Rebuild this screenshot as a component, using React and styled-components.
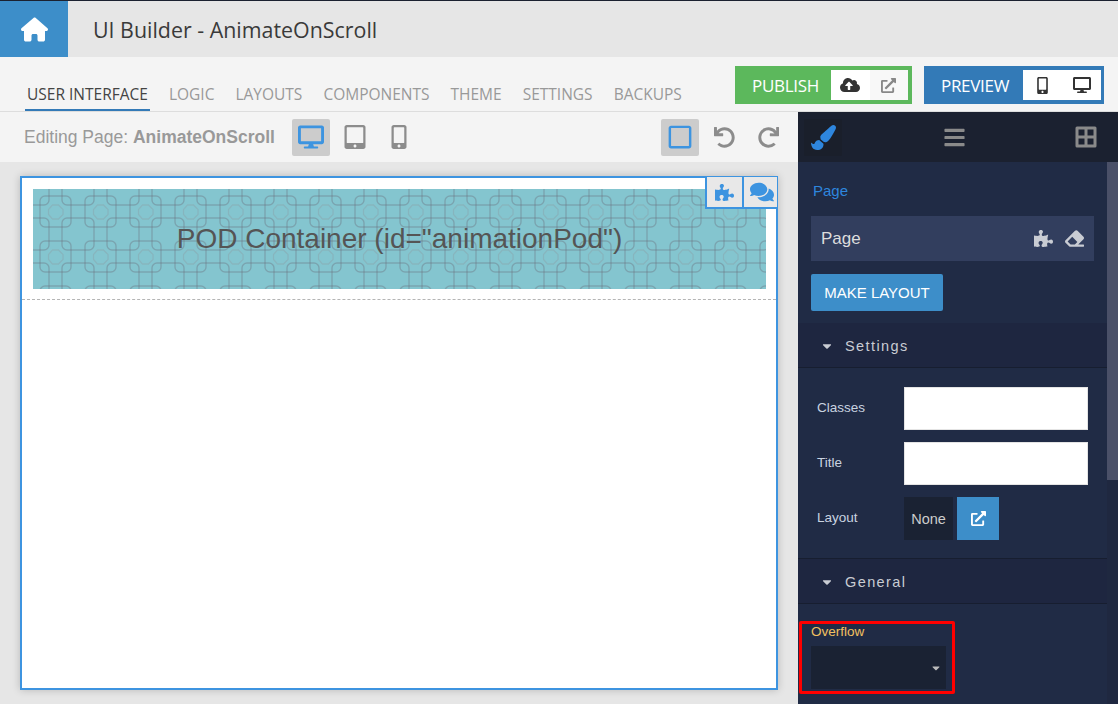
import React from 'react'
import styled, { createGlobalStyle } from 'styled-components'
import {
  FaCloudUploadAlt, FaExternalLinkAlt, FaMobileAlt, FaDesktop, FaTabletAlt,
  FaRegSquare, FaUndo, FaRedo, FaPaintBrush, FaBars, FaBorderAll, FaPuzzlePiece,
  FaComments, FaEraser, FaCaretDown,
} from 'react-icons/fa'
import { FaHouse } from 'react-icons/fa6'

const TabsData = ['USER INTERFACE', 'LOGIC', 'LAYOUTS', 'COMPONENTS', 'THEME', 'SETTINGS', 'BACKUPS']

const App = () => {
  return (
    <Page>
      <GlobalStyle />
      <Header>
        <HomeButton><FaHouse /></HomeButton>
        <AppTitle>UI Builder - AnimateOnScroll</AppTitle>
      </Header>
      <TabsBar>
        <Tabs>
          {TabsData.map((tab, index) => (
            <Tab key={tab} $active={index === 0}>{tab}</Tab>
          ))}
        </Tabs>
        <ActionGroup $color="#5cb85c" $width="177px">
          <ActionLabel>PUBLISH</ActionLabel>
          <ActionIcons $width="77px">
            <ActionIcon $color="#333"><FaCloudUploadAlt size={20} /></ActionIcon>
            <ActionIcon $color="#888" $muted><FaExternalLinkAlt size={15} /></ActionIcon>
          </ActionIcons>
        </ActionGroup>
        <ActionGroup $color="#337ab7" $width="180px" $preview>
          <ActionLabel>PREVIEW</ActionLabel>
          <ActionIcons $width="78px">
            <ActionIcon $color="#333"><FaMobileAlt size={17} /></ActionIcon>
            <ActionIcon $color="#333"><FaDesktop size={18} /></ActionIcon>
          </ActionIcons>
        </ActionGroup>
      </TabsBar>
      <Main>
        <Editor>
          <Toolbar>
            <EditingLabel>Editing Page: <b>AnimateOnScroll</b></EditingLabel>
            <ToolGroup>
              <ToolButton $active><FaDesktop size={26} /></ToolButton>
              <ToolButton><FaTabletAlt size={24} /></ToolButton>
              <ToolButton><FaMobileAlt size={24} /></ToolButton>
            </ToolGroup>
            <ToolGroup $end>
              <ToolButton $active><FaRegSquare size={26} /></ToolButton>
              <ToolButton><FaUndo size={21} /></ToolButton>
              <ToolButton><FaRedo size={21} /></ToolButton>
            </ToolGroup>
          </Toolbar>
          <CanvasArea>
            <Canvas>
              <CanvasTools>
                <CanvasTool><FaPuzzlePiece size={19} /></CanvasTool>
                <CanvasTool $wide><FaComments size={24} /></CanvasTool>
              </CanvasTools>
              <PodBlock>
                <PodPattern aria-hidden="true">
                  <defs>
                    <pattern id="podTile" width="45" height="45" patternUnits="userSpaceOnUse">
                      <g fill="none" stroke="#6a6f7c" strokeOpacity="0.38" strokeWidth="1.4">
                        <rect x="7" y="7" width="31" height="31" rx="5" />
                        <path d="M0 16H11a5 5 0 0 0 5-5V0M45 16H34a5 5 0 0 1-5-5V0M0 29H11a5 5 0 0 1 5 5V45M45 29H34a5 5 0 0 0-5 5V45" />
                      </g>
                      <path d="M19.5 16h6l4.500 4.500v5L25.500 30h-6L15.500 25.500v-5z" fill="none" stroke="#8a9ea6" strokeOpacity="0.4" strokeWidth="1.3" />
                    </pattern>
                  </defs>
                  <rect width="100%" height="100%" fill="url(#podTile)" />
                </PodPattern>
                <PodText>POD Container (id="animationPod")</PodText>
              </PodBlock>
              <DashedLine />
            </Canvas>
          </CanvasArea>
        </Editor>
        <Sidebar>
          <SideTabs>
            <SideTab $active><FaPaintBrush size={25} /></SideTab>
            <SideTab><FaBars size={23} /></SideTab>
            <SideTab><FaBorderAll size={24} /></SideTab>
          </SideTabs>
          <SideBody>
            <SideContent>
              <Crumb>Page</Crumb>
              <PageRow>
                <PageName>Page</PageName>
                <PageIcons>
                  <FaPuzzlePiece size={19} />
                  <FaEraser size={19} />
                </PageIcons>
              </PageRow>
              <MakeLayout>MAKE LAYOUT</MakeLayout>
              <SectionHead><FaCaretDown size={14} />Settings</SectionHead>
              <Fields>
                <FieldRow>
                  <FieldLabel>Classes</FieldLabel>
                  <TextBox />
                </FieldRow>
                <FieldRow>
                  <FieldLabel>Title</FieldLabel>
                  <TextBox />
                </FieldRow>
                <FieldRow>
                  <FieldLabel>Layout</FieldLabel>
                  <NoneBox>None</NoneBox>
                  <OpenButton><FaExternalLinkAlt size={15} /></OpenButton>
                </FieldRow>
              </Fields>
              <SectionHead $spaced><FaCaretDown size={14} />General</SectionHead>
              <OverflowField>
                <OverflowLabel>Overflow</OverflowLabel>
                <SelectBox><FaCaretDown size={12} /></SelectBox>
                <Highlight />
              </OverflowField>
            </SideContent>
            <Scrollbar><ScrollThumb /></Scrollbar>
          </SideBody>
        </Sidebar>
      </Main>
    </Page>
  )
}

export default App

const GlobalStyle = createGlobalStyle`
  html, body {
    margin: 0;
    padding: 0;
    overflow: hidden;
  }
  * {
    box-sizing: border-box;
  }
`
const Page = styled.div`
  width: 1118px;
  height: 704px;
  display: flex;
  flex-direction: column;
  overflow: hidden;
  border-top: 1px solid #1b2130;
  background: #f4f4f4;
  font-family: "Liberation Sans", Arial, sans-serif;
`
const Header = styled.div`
  height: 56px;
  flex: none;
  display: flex;
  align-items: center;
  background: #e6e6e6;
`
const HomeButton = styled.div`
  width: 68px;
  height: 100%;
  display: flex;
  align-items: center;
  justify-content: center;
  background: #3d8ec9;
  color: #fff;
  font-size: 27px;
`
const AppTitle = styled.div`
  margin-left: 25px;
  font-family: "Open Sans", sans-serif;
  font-size: 21.4px;
  color: #3a3a3a;
`
const TabsBar = styled.div`
  height: 55px;
  flex: none;
  display: flex;
  padding: 9px 14px 0 25px;
  background: #f4f4f4;
  border-bottom: 1px solid #ddd;
`
const Tabs = styled.div`
  flex: 1;
  display: flex;
  gap: 17px;
`
const Tab = styled.div`
  height: 45px;
  padding: 18px 2px 0;
  font-family: "Open Sans", sans-serif;
  font-size: 15.5px;
  line-height: 20px;
  white-space: nowrap;
  color: ${p => (p.$active ? '#444' : '#999')};
  border-bottom: 2px solid ${p => (p.$active ? '#337ab7' : 'transparent')};
`
const ActionGroup = styled.div`
  width: ${p => p.$width};
  height: 38px;
  flex: none;
  display: flex;
  align-items: stretch;
  margin-left: ${p => (p.$preview ? '12px' : '0')};
  padding: 4px ${p => (p.$preview ? '3px' : '4px')} 4px 0;
  background: ${p => p.$color};
`
const ActionLabel = styled.div`
  flex: 1;
  padding-left: 17px;
  display: flex;
  align-items: center;
  font-family: "Open Sans", sans-serif;
  font-size: 17px;
  letter-spacing: -0.3px;
  color: #fff;
`
const ActionIcons = styled.div`
  width: ${p => p.$width};
  flex: none;
  display: flex;
`
const ActionIcon = styled.div`
  flex: 1;
  display: flex;
  align-items: center;
  justify-content: center;
  color: ${p => p.$color};
  background: ${p => (p.$muted ? '#f8f8f8' : '#fff')};
`
const Main = styled.div`
  flex: 1;
  min-height: 0;
  display: flex;
`
const Editor = styled.div`
  flex: 1;
  display: flex;
  flex-direction: column;
`
const Toolbar = styled.div`
  height: 50px;
  flex: none;
  display: flex;
  align-items: center;
  padding: 0 11px 0 24px;
  background: #f4f4f4;
`
const EditingLabel = styled.div`
  width: 268px;
  font-size: 17.5px;
  white-space: nowrap;
  color: #999;
`
const ToolGroup = styled.div`
  display: flex;
  gap: 6px;
  margin-left: ${p => (p.$end ? 'auto' : '0')};
`
const ToolButton = styled.div`
  width: 38px;
  height: 37px;
  display: flex;
  align-items: center;
  justify-content: center;
  border-radius: 2px;
  background: ${p => (p.$active ? '#ccc' : 'transparent')};
  color: ${p => (p.$active ? '#3d94e0' : '#8c8c8c')};
`
const CanvasArea = styled.div`
  flex: 1;
  padding: 14px 20px 14px 20px;
  background: #e6e6e6;
`
const Canvas = styled.div`
  position: relative;
  height: 514px;
  padding: 11px 10px 11px 11px;
  background: #fff;
  border: 2px solid #3d94e0;
  box-shadow: 0 0 8px rgba(0, 0, 0, 0.2);
`
const CanvasTools = styled.div`
  position: absolute;
  top: -1px;
  right: -1px;
  z-index: 2;
  display: flex;
  height: 32px;
  background: #e8e8e8;
  border: 2px solid #3d94e0;
  border-top-width: 0;
  border-right-width: 0;
`
const CanvasTool = styled.div`
  width: 35px;
  padding-left: ${p => (p.$wide ? '3px' : '0')};
  display: flex;
  align-items: center;
  justify-content: center;
  color: #3d94e0;
  border-left: ${p => (p.$wide ? '2px solid #3d94e0' : '0')};
`
const PodBlock = styled.div`
  position: relative;
  height: 100px;
  display: flex;
  align-items: center;
  justify-content: center;
  background: #84c5cf;
`
const PodPattern = styled.svg`
  position: absolute;
  inset: 0;
  width: 100%;
  height: 100%;
`
const PodText = styled.div`
  position: relative;
  font-size: 28px;
  color: #555;
`
const DashedLine = styled.div`
  margin: 10px -10px 0 -11px;
  border-top: 1px dashed #b5b5b5;
`
const Sidebar = styled.div`
  width: 320px;
  flex: none;
  display: flex;
  flex-direction: column;
  background: #202b45;
`
const SideTabs = styled.div`
  height: 50px;
  flex: none;
  display: flex;
  align-items: center;
  justify-content: space-between;
  padding: 0 13px 0 6px;
  background: #1b2130;
`
const SideTab = styled.div`
  width: 38px;
  height: 37px;
  display: flex;
  align-items: center;
  justify-content: center;
  border-radius: 2px;
  background: ${p => (p.$active ? '#1a1f2b' : 'transparent')};
  color: ${p => (p.$active ? '#2e86de' : '#8a8a8a')};
`
const SideBody = styled.div`
  flex: 1;
  min-height: 0;
  display: flex;
`
const SideContent = styled.div`
  flex: 1;
  min-width: 0;
`
const Crumb = styled.div`
  height: 54px;
  padding: 21px 0 0 15px;
  font-size: 15px;
  line-height: 16px;
  color: #2e86de;
`
const PageRow = styled.div`
  height: 45px;
  margin: 0 13px;
  padding: 0 10px;
  display: flex;
  align-items: center;
  justify-content: space-between;
  background: #323e5e;
  color: #c9ccd3;
`
const PageName = styled.div`
  font-size: 17px;
  color: #ddd;
`
const PageIcons = styled.div`
  display: flex;
  gap: 12px;
`
const MakeLayout = styled.div`
  width: 132px;
  height: 37px;
  margin: 13px 0 12px 13px;
  display: flex;
  align-items: center;
  justify-content: center;
  border-radius: 2px;
  background: #3d8ec9;
  color: #fff;
  font-size: 15px;
`
const SectionHead = styled.div`
  height: ${p => (p.$spaced ? '46px' : '45px')};
  display: flex;
  align-items: center;
  gap: 11px;
  padding: 1px 0 0 22px;
  margin-top: ${p => (p.$spaced ? '18px' : '0')};
  background: #1e2640;
  border-bottom: 1px solid #171e30;
  border-top: ${p => (p.$spaced ? '1px solid #171e30' : '0')};
  color: #c9ccd3;
  font-size: 14.5px;
  letter-spacing: 1.4px;
`
const Fields = styled.div`
  padding: 19px 19px 0;
  display: flex;
  flex-direction: column;
  gap: 12px;
`
const FieldRow = styled.div`
  height: 43px;
  display: flex;
  align-items: center;
`
const FieldLabel = styled.div`
  width: 87px;
  margin-top: -3px;
  font-size: 13.5px;
  color: #c9d3e0;
`
const TextBox = styled.div`
  width: 184px;
  height: 43px;
  background: #fff;
  border: 1px solid #e4e4e4;
`
const NoneBox = styled.div`
  width: 49px;
  height: 43px;
  display: flex;
  align-items: center;
  justify-content: center;
  background: #1a2233;
  color: #ccc;
  font-size: 14.5px;
`
const OpenButton = styled.div`
  width: 42px;
  height: 43px;
  margin-left: 4px;
  display: flex;
  align-items: center;
  justify-content: center;
  background: #3d8ec9;
  color: #fff;
`
const OverflowField = styled.div`
  position: relative;
  padding: 20px 0 0 13px;
`
const OverflowLabel = styled.div`
  font-size: 13.5px;
  line-height: 16px;
  color: #f0c060;
`
const SelectBox = styled.div`
  width: 135px;
  height: 43px;
  margin-top: 6px;
  padding-right: 4px;
  display: flex;
  align-items: center;
  justify-content: flex-end;
  background: #1a2233;
  color: #bbb;
`
const Highlight = styled.div`
  position: absolute;
  top: 17px;
  left: 1px;
  width: 156px;
  height: 73px;
  border: 3px solid #f00;
  border-radius: 2px;
`
const Scrollbar = styled.div`
  width: 11px;
  flex: none;
  background: #1f2840;
`
const ScrollThumb = styled.div`
  height: 318px;
  background: #4a5068;
`
